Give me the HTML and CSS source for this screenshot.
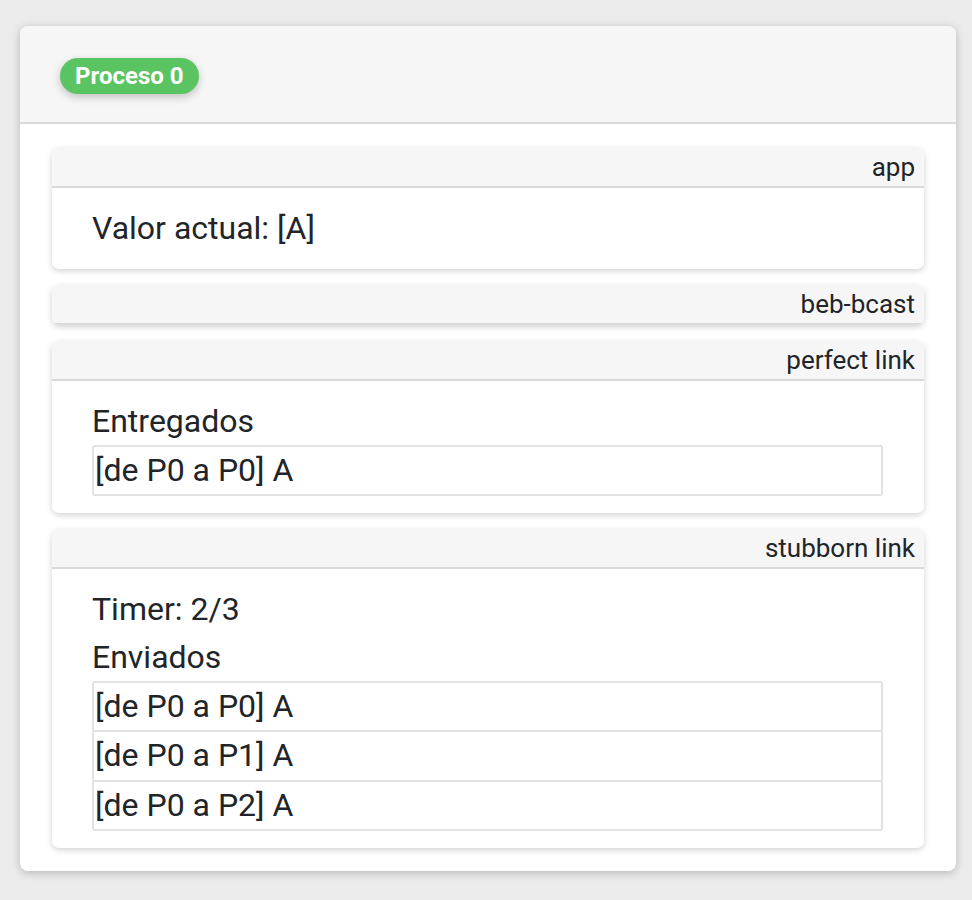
FILE: index.html
```html
<!DOCTYPE html>
<html lang="es">
<head>
<meta charset="utf-8">
<title>Proceso 0</title>
<link rel="stylesheet" href="styles.css">
</head>
<body>
<div class="process">
  <div class="process-header">
    <span class="badge">Proceso 0</span>
  </div>
  <div class="process-body">
    <div class="layer">
      <div class="layer-header">app</div>
      <div class="layer-body">
        <div class="line">Valor actual: [A]</div>
      </div>
    </div>
    <div class="layer">
      <div class="layer-header">beb-bcast</div>
    </div>
    <div class="layer">
      <div class="layer-header">perfect link</div>
      <div class="layer-body">
        <div class="line">Entregados</div>
        <ul class="msgs">
          <li>[de P0 a P0] A</li>
        </ul>
      </div>
    </div>
    <div class="layer">
      <div class="layer-header">stubborn link</div>
      <div class="layer-body">
        <div class="line">Timer: 2/3</div>
        <div class="line">Enviados</div>
        <ul class="msgs">
          <li>[de P0 a P0] A</li>
          <li>[de P0 a P1] A</li>
          <li>[de P0 a P2] A</li>
        </ul>
      </div>
    </div>
  </div>
</div>
</body>
</html>
```

FILE: styles.css
```css
* { box-sizing: border-box; }
html, body {
  margin: 0;
  background: #ebebeb;
}
body {
  padding: 26px 16px 20px 20px;
  font-family: Roboto, "Liberation Sans", Arial, sans-serif;
  color: #212529;
}
.process {
  background: #fff;
  border-radius: 8px;
  box-shadow: 0 2px 8px rgba(0,0,0,0.22);
  overflow: hidden;
}
.process-header {
  background: #f6f6f6;
  height: 98px;
  border-bottom: 2px solid #d9d9d9;
  padding: 32px 40px 0;
}
.badge {
  display: inline-block;
  background: #5ac463;
  color: #fff;
  font-weight: 700;
  font-size: 24px;
  line-height: 36px;
  padding: 0 15px;
  border-radius: 18px;
  box-shadow: 0 3px 8px rgba(0,0,0,0.22);
}
.process-body {
  padding: 24px 32px 23px;
  display: flex;
  flex-direction: column;
  gap: 16px;
}
.layer {
  background: #fff;
  border-radius: 7px;
  box-shadow: 0 2px 6px rgba(0,0,0,0.18);
  overflow: hidden;
}
.layer-header {
  background: #f6f6f6;
  border-bottom: 2px solid #d9d9d9;
  text-align: right;
  font-size: 26px;
  line-height: 38px;
  padding: 0 9px;
}
.layer-body {
  padding: 16px 41px 17px 40px;
}
.line {
  font-size: 32px;
  line-height: 48px;
}
.msgs {
  list-style: none;
  margin: 0;
  padding: 0;
  border: 2px solid #e2e2e2;
  border-radius: 3px;
}
.msgs li {
  font-size: 32px;
  line-height: 47px;
  padding: 0 0 0 1px;
}
.msgs li + li {
  border-top: 2px solid #e2e2e2;
  line-height: 47.5px;
}
```
